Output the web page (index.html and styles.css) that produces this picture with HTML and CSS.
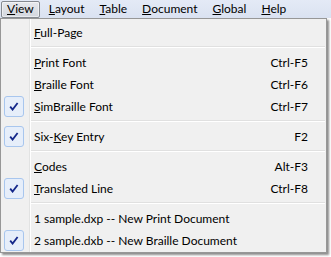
FILE: index.html
```html
<!DOCTYPE html>
<html>
<head>
<meta charset="utf-8">
<link rel="stylesheet" href="styles.css">
</head>
<body>
<div class="screen">
  <div class="menubar">
    <div class="mitem active"><u>V</u>iew</div>
    <div class="mitem"><u>L</u>ayout</div>
    <div class="mitem"><u>T</u>able</div>
    <div class="mitem"><u>D</u>ocument</div>
    <div class="mitem"><u>G</u>lobal</div>
    <div class="mitem"><u>H</u>elp</div>
  </div>
  <div class="dropdown">
    <div class="row"><span class="gut"></span><span class="label"><u>F</u>ull-Page</span><span class="key"></span></div>
    <div class="sep"></div>
    <div class="row"><span class="gut"></span><span class="label"><u>P</u>rint Font</span><span class="key">Ctrl-F5</span></div>
    <div class="row"><span class="gut"></span><span class="label"><u>B</u>raille Font</span><span class="key">Ctrl-F6</span></div>
    <div class="row"><span class="gut"><span class="check"><svg width="10" height="9" viewBox="0 0 10 9"><path d="M1.2 4.6 L3.6 7.6 L8.6 1" fill="none" stroke="#14278a" stroke-width="1.8"/></svg></span></span><span class="label"><u>S</u>imBraille Font</span><span class="key">Ctrl-F7</span></div>
    <div class="sep"></div>
    <div class="row"><span class="gut"><span class="check"><svg width="10" height="9" viewBox="0 0 10 9"><path d="M1.2 4.6 L3.6 7.6 L8.6 1" fill="none" stroke="#14278a" stroke-width="1.8"/></svg></span></span><span class="label">Six-<u>K</u>ey Entry</span><span class="key">F2</span></div>
    <div class="sep"></div>
    <div class="row"><span class="gut"></span><span class="label"><u>C</u>odes</span><span class="key">Alt-F3</span></div>
    <div class="row"><span class="gut"><span class="check"><svg width="10" height="9" viewBox="0 0 10 9"><path d="M1.2 4.6 L3.6 7.6 L8.6 1" fill="none" stroke="#14278a" stroke-width="1.8"/></svg></span></span><span class="label"><u>T</u>ranslated Line</span><span class="key">Ctrl-F8</span></div>
    <div class="sep"></div>
    <div class="row"><span class="gut"></span><span class="label">1 sample.dxp -- New Print Document</span><span class="key"></span></div>
    <div class="row"><span class="gut"><span class="check"><svg width="10" height="9" viewBox="0 0 10 9"><path d="M1.2 4.6 L3.6 7.6 L8.6 1" fill="none" stroke="#14278a" stroke-width="1.8"/></svg></span></span><span class="label">2 sample.dxb -- New Braille Document</span><span class="key"></span></div>
  </div>
</div>
</body>
</html>
```

FILE: styles.css
```css
html, body {
  margin: 0;
  padding: 0;
  background: #ffffff;
}
.screen {
  width: 331px;
  height: 257px;
  overflow: hidden;
  font-family: Lato, "Open Sans", sans-serif;
  font-size: 12px;
  color: #000;
}
u {
  text-decoration: underline;
  text-underline-offset: 1px;
}
.menubar {
  height: 18px;
  display: flex;
  align-items: center;
  padding-left: 1px;
  background: linear-gradient(#e4eaf6, #dae2f1);
}
.mitem {
  height: 15px;
  line-height: 14px;
  padding: 0 5px;
  margin-right: 3px;
  border: 1px solid transparent;
  border-radius: 2px;
}
.mitem.active {
  border-color: #858a91;
  background: linear-gradient(#e6e8ec, #d3d7de);
  box-shadow: inset 0 0 0 1px rgba(255,255,255,0.5);
}
.dropdown {
  width: 325px;
  box-sizing: content-box;
  border: 1px solid #979797;
  padding: 2px 0 1px 0;
  background: linear-gradient(to right, #f0f0f0 0, #f0f0f0 28px, #e2e3e3 28px, #e2e3e3 29px, #ffffff 29px, #ffffff 30px, #f0f0f0 30px);
  box-shadow: 2px 2px 2px rgba(0,0,0,0.45);
}
.row {
  height: 22px;
  display: flex;
  align-items: center;
}
.gut {
  width: 33px;
  height: 22px;
  flex: none;
  display: flex;
  align-items: center;
}
.check {
  margin-left: 3px;
  width: 20px;
  height: 21px;
  box-sizing: border-box;
  border: 1px solid #a8c6ee;
  border-radius: 3px;
  background: #e6eefa;
  display: flex;
  align-items: center;
  justify-content: center;
}
.label {
  flex: 1;
  white-space: nowrap;
}
.key {
  padding-right: 18px;
  white-space: nowrap;
}
.sep {
  height: 8px;
  margin-left: 30px;
  margin-right: 1px;
  display: flex;
  flex-direction: column;
  justify-content: center;
}
.sep::before {
  content: "";
  display: block;
  height: 1px;
  background: #e0e0e0;
}
.sep::after {
  content: "";
  display: block;
  height: 1px;
  background: #ffffff;
}
```
